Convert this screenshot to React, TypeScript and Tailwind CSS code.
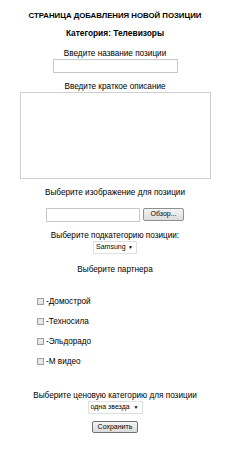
import React from "react";

const Check = ({ label }: { label: string }) => (
  <div className="flex h-[20px] items-center pl-[37px]">
    <span className="inline-block h-[7px] w-[7px] border border-[#a0a0a0] bg-[#e8e8e8]" />
    <span className="ml-[2px] text-[8.2px] leading-[11px]">{label}</span>
  </div>
);

export default function App() {
  return (
    <div className="h-[459px] w-[246px] bg-white">
      <div
        className="flex w-[230px] flex-col text-black"
        style={{ fontFamily: '"Liberation Sans", Arial, sans-serif' }}
      >
        <div className="pt-[10px] text-center text-[7.8px] font-bold leading-[11px]">
          СТРАНИЦА ДОБАВЛЕНИЯ НОВОЙ ПОЗИЦИИ
        </div>
        <div className="mt-[7px] text-center text-[8.4px] font-bold leading-[11px]">
          Категория: Телевизоры
        </div>
        <div className="mt-[9px] text-center text-[8.2px] leading-[11px]">Введите название позиции</div>
        <div className="flex justify-center">
          <div className="h-[14px] w-[125px] border border-[#c8c8c8] bg-white" />
        </div>
        <div className="mt-[8px] text-center text-[8.2px] leading-[11px]">Введите краткое описание</div>
        <div className="flex justify-center">
          <div className="h-[87px] w-[191px] border border-[#cfcfcf] bg-white" />
        </div>
        <div className="mt-[8px] text-center text-[8.2px] leading-[11px]">Выберите изображение для позиции</div>
        <div className="mt-[10px] flex justify-center gap-[3px]">
          <div className="h-[14px] w-[94px] border border-[#c8c8c8] bg-white" />
          <div className="flex h-[13px] w-[41px] items-center justify-center rounded-[2px] border border-[#8f8f8f] bg-gradient-to-b from-[#f4f4f4] to-[#dcdcdc] text-[7px]">
            Обзор...
          </div>
        </div>
        <div className="mt-[8px] text-center text-[8.2px] leading-[11px]">Выберите подкатегорию позиции:</div>
        <div className="flex justify-center">
          <div className="flex h-[13px] w-[44px] items-center justify-between border border-[#e0e0e0] pl-[2px] pr-[3px] text-[7px]">
            <span>Samsung</span>
            <span className="text-[5px]">▼</span>
          </div>
        </div>
        <div className="mt-[10px] text-center text-[8.2px] leading-[11px]">Выберите партнера</div>
        <div className="mt-[16px] flex flex-col">
          <Check label="-Домострой" />
          <Check label="-Техносила" />
          <Check label="-Эльдорадо" />
          <Check label="-М видео" />
        </div>
        <div className="mt-[19px] text-center text-[8.2px] leading-[11px]">
          Выберите ценовую категорию для позиции
        </div>
        <div className="flex justify-center">
          <div className="flex h-[13px] w-[55px] items-center justify-between border border-[#e0e0e0] pl-[2px] pr-[3px] text-[7px]">
            <span>одна звезда</span>
            <span className="text-[5px]">▼</span>
          </div>
        </div>
        <div className="mt-[7px] flex justify-center">
          <div className="flex h-[12px] w-[46px] items-center justify-center rounded-[2px] border border-[#707070] bg-gradient-to-b from-[#f4f4f4] to-[#dcdcdc] text-[7px]">
            Сохранить
          </div>
        </div>
      </div>
    </div>
  );
}
